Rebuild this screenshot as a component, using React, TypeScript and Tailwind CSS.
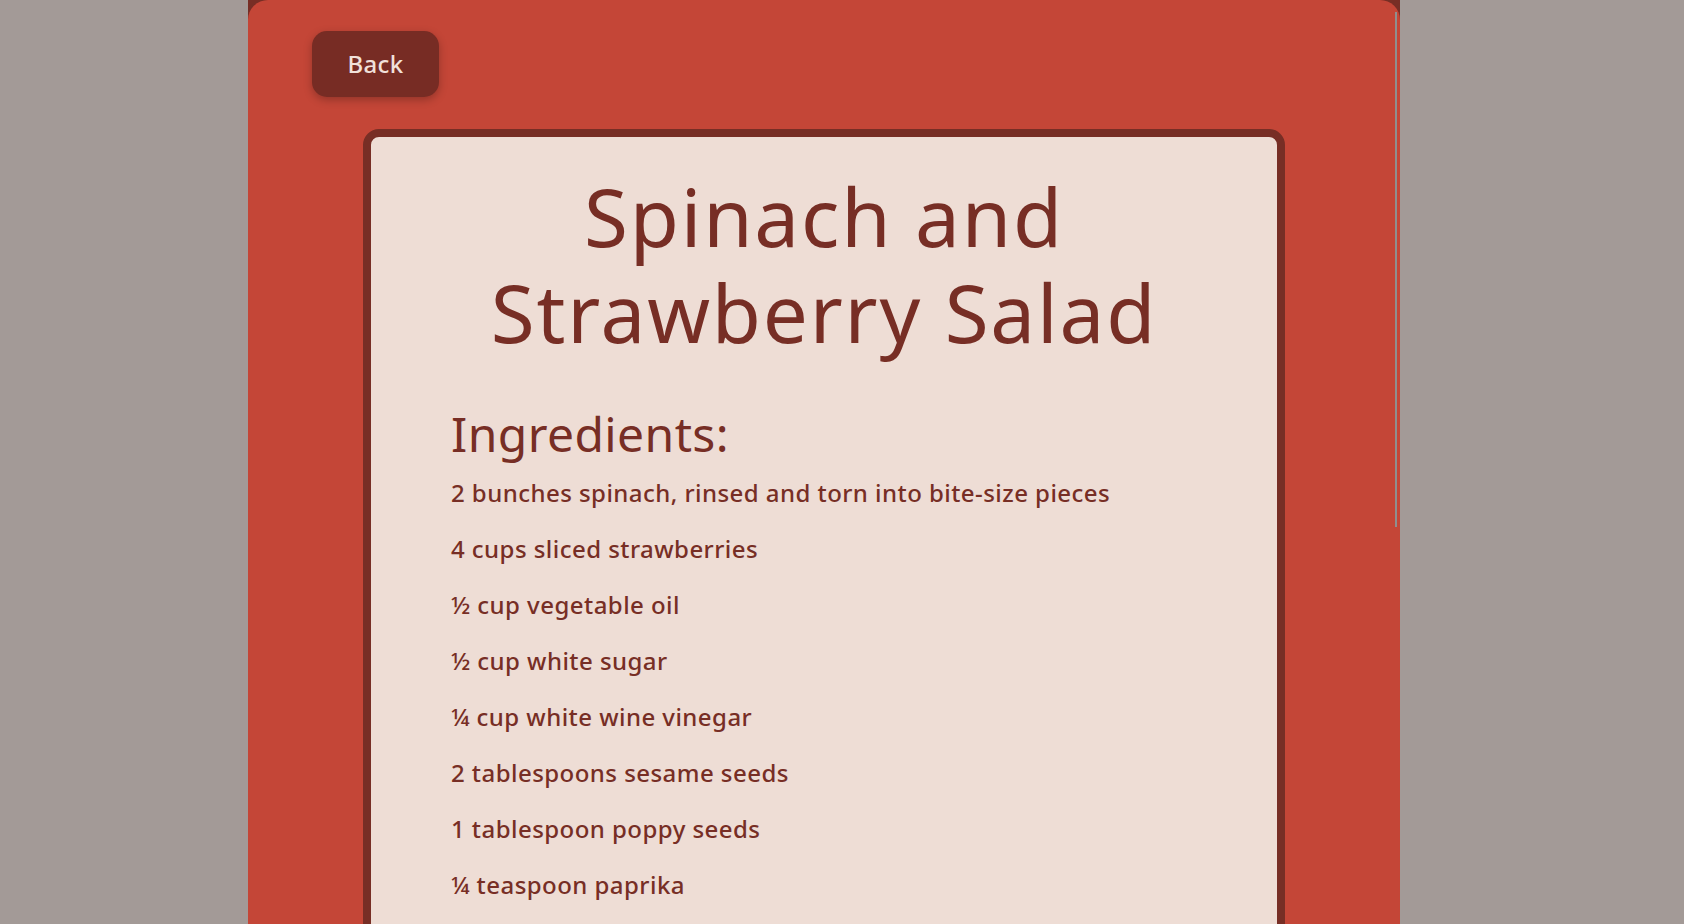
import React from "react";

const items = [
  "2 bunches spinach, rinsed and torn into bite-size pieces",
  "4 cups sliced strawberries",
  "½ cup vegetable oil",
  "½ cup white sugar",
  "¼ cup white wine vinegar",
  "2 tablespoons sesame seeds",
  "1 tablespoon poppy seeds",
  "¼ teaspoon paprika",
];

export default function App() {
  return (
    <div
      className="w-full h-[924px] overflow-hidden bg-[#a39a97]"
      style={{ fontFamily: '"Noto Sans", "Open Sans", sans-serif' }}
    >
      <div className="ml-[248px] w-[1152px] h-[924px] bg-[#772e25] relative">
        <div className="h-full bg-[#c44637] rounded-t-[20px] overflow-hidden">
          <div className="pl-[64px] pt-[31px]">
            <button className="w-[127px] h-[66px] rounded-[15px] bg-[#772c24] text-[#f1e1da] text-[24px] font-medium tracking-[0.3px] shadow-[0_3px_8px_rgba(0,0,0,0.25)]">
              Back
            </button>
          </div>
          <div className="mx-auto mt-[32px] w-[922px] border-[8px] border-[#772e25] rounded-t-[16px] bg-[#eeddd5] h-[900px]">
            <h1 className="text-center text-[80px] leading-[96px] tracking-[1.8px] text-[#772e25] font-normal mt-[31px]">
              Spinach and
              <br />
              Strawberry Salad
            </h1>
            <div className="pl-[80px] mt-[45px]">
              <h2 className="text-[48px] leading-[58px] tracking-[0.4px] text-[#772e25] font-normal">
                Ingredients:
              </h2>
              <ul className="flex flex-col gap-[28px] mt-[16px]">
                {items.map((t) => (
                  <li
                    key={t}
                    className="text-[24px] leading-[28px] tracking-[0.45px] font-medium text-[#772e25]"
                  >
                    {t}
                  </li>
                ))}
              </ul>
            </div>
          </div>
        </div>
        <div className="absolute right-[3px] top-[12px] w-[2px] h-[515px] bg-[#8f8f8f]" />
      </div>
    </div>
  );
}
